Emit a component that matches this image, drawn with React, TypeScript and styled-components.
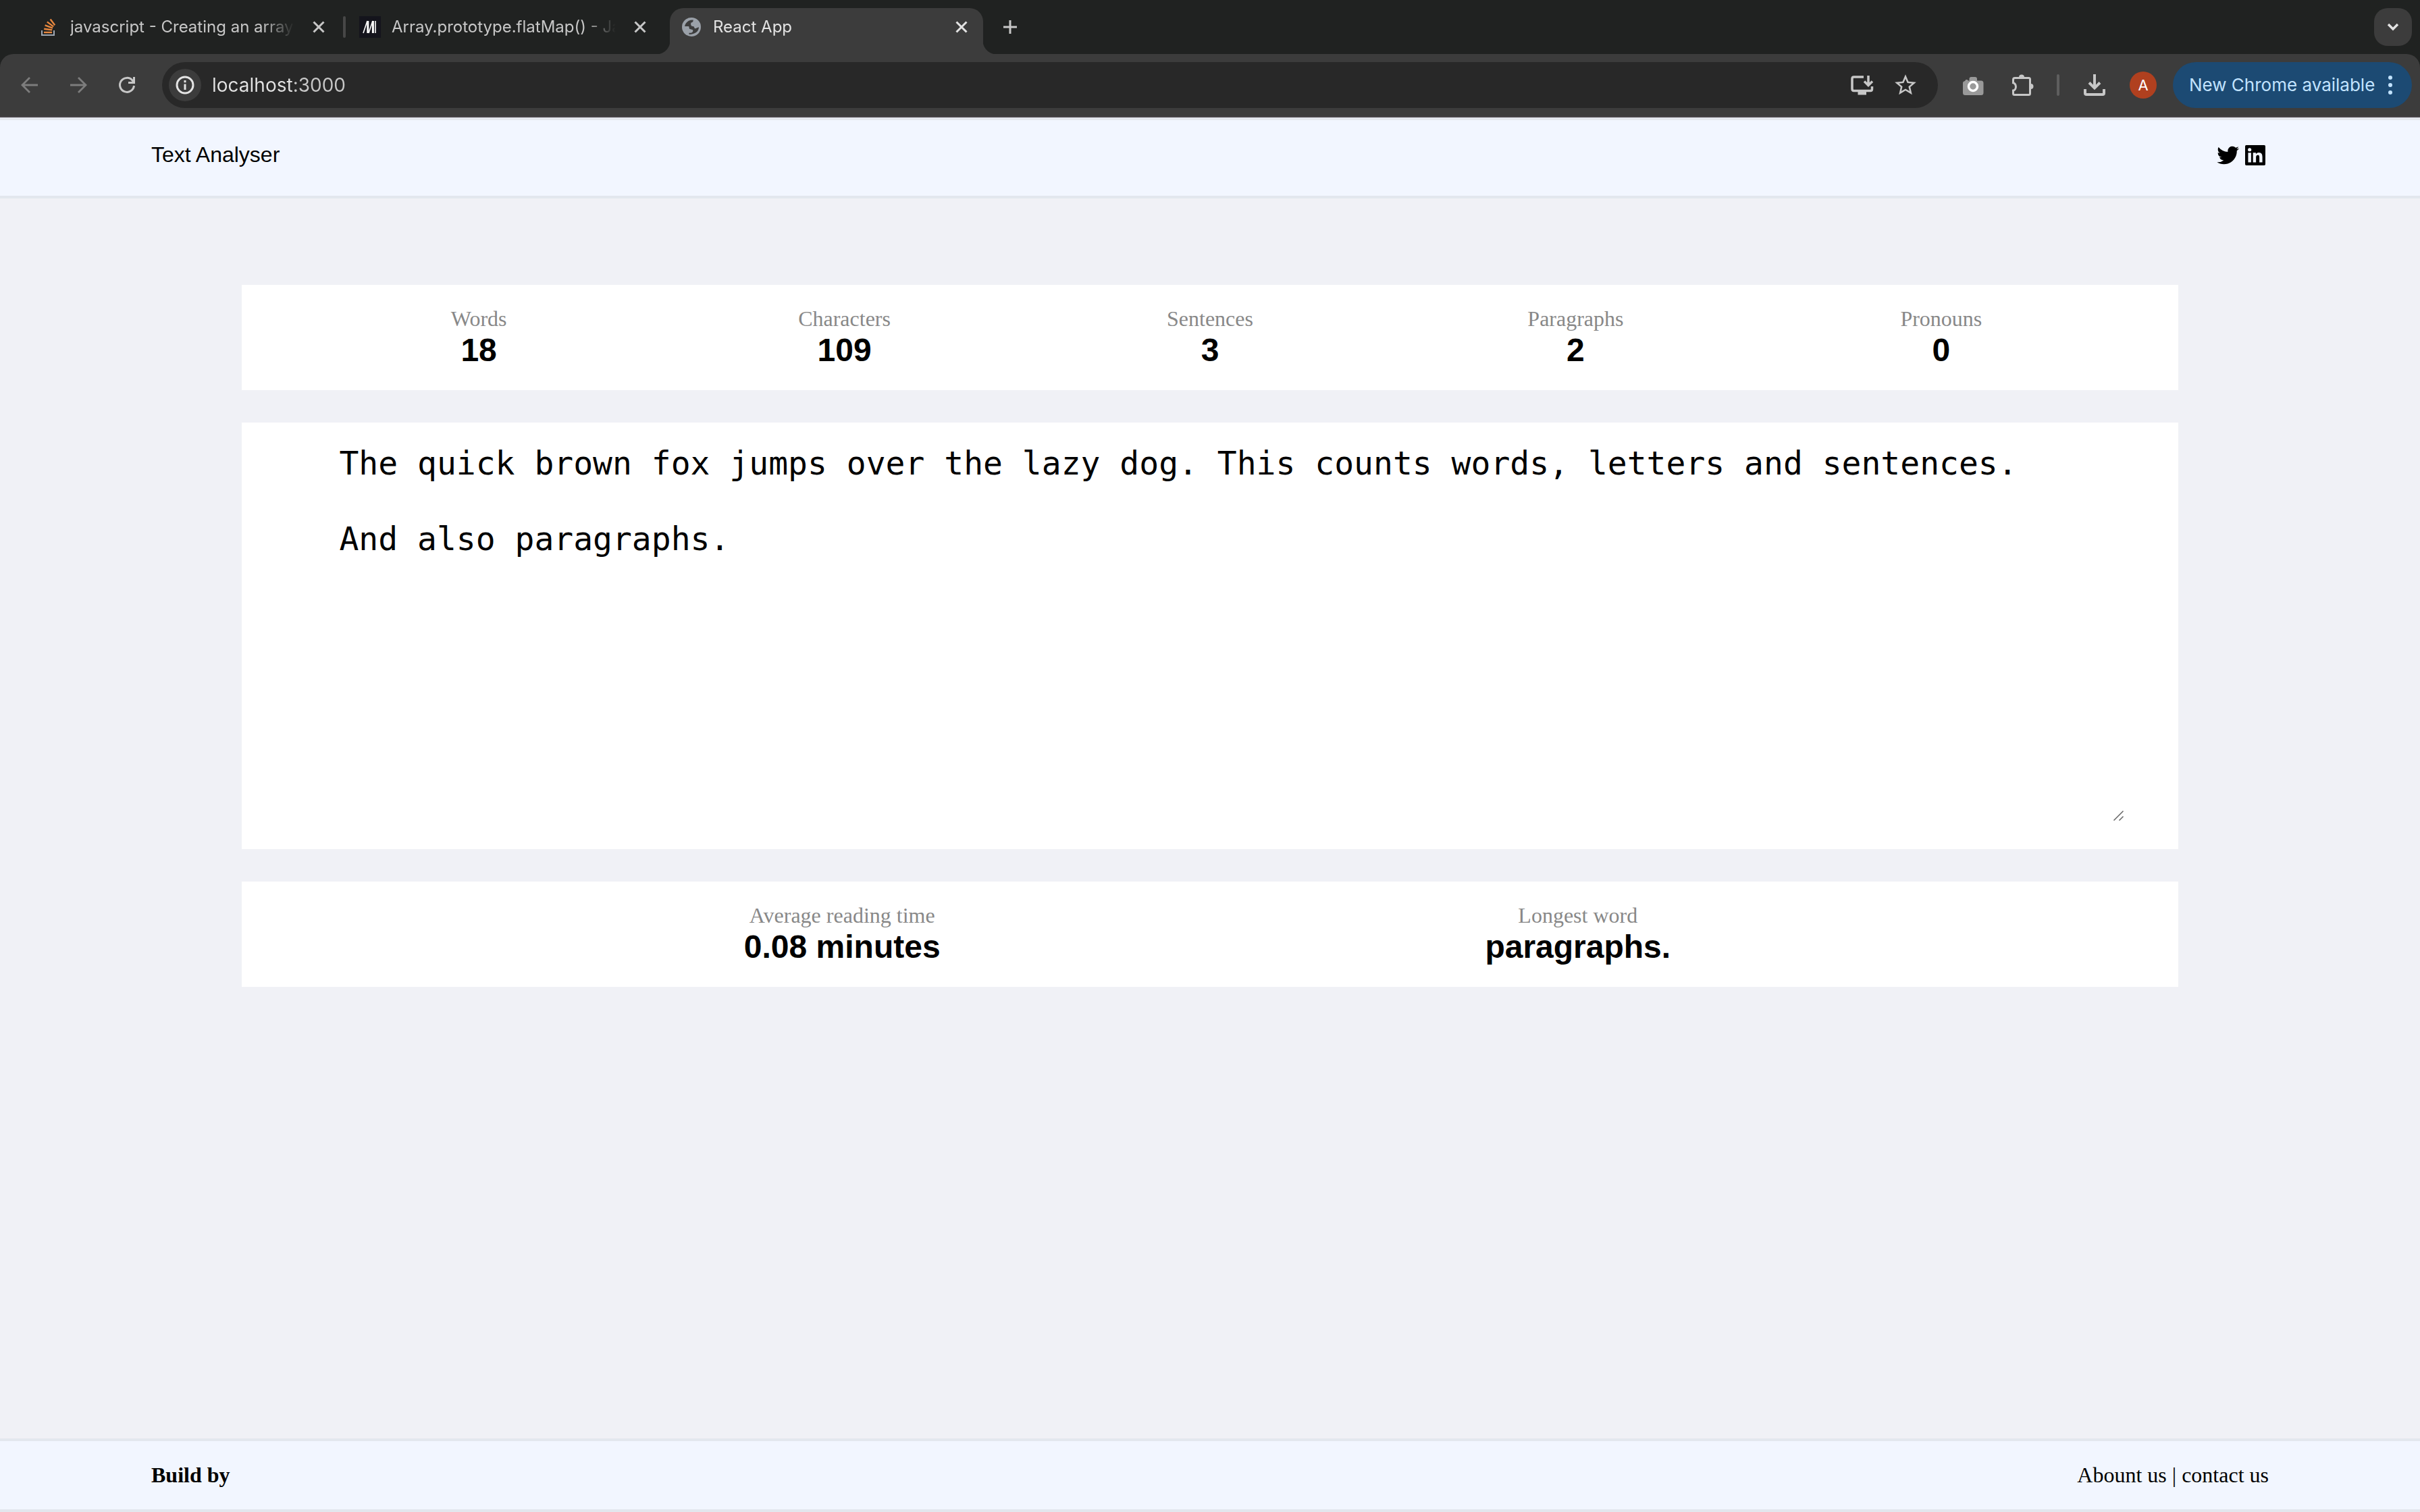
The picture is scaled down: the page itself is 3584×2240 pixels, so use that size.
import React from "react";
import styled, { createGlobalStyle, css } from "styled-components";
import { BiLogoTwitter, BiLogoLinkedinSquare } from "react-icons/bi";
import { MdStarBorder } from "react-icons/md";

const GlobalStyle = createGlobalStyle`
  *, *::before, *::after { box-sizing: border-box; }
  body {
    margin: 0;
    background: #f0f1f6;
    color: #000;
    font-family: "Liberation Serif", "Times New Roman", serif;
    font-size: 32px;
  }
  button {
    border: 0;
    padding: 0;
    background: none;
    color: inherit;
    font: inherit;
    cursor: pointer;
  }
  svg { display: block; overflow: visible; }
`;

const uiFont = css`
  font-family: Inter, Roboto, sans-serif;
`;
const sansFont = css`
  font-family: "Liberation Sans", Arial, sans-serif;
`;

const Screen = styled.div`
  min-height: 100vh;
  display: flex;
  flex-direction: column;
`;

/* ---------- browser window ---------- */

const Browser = styled.div`
  ${uiFont}
  background: #202221;
  color: #c7c7c7;
`;

const TabStrip = styled.div`
  display: flex;
  align-items: flex-start;
  height: 80px;
  padding: 12px 12px 0 34px;
`;

const Tab = styled.div<{ $active?: boolean }>`
  position: relative;
  display: flex;
  align-items: center;
  width: 464px;
  height: 68px;
  margin: 0 6px;
  padding: 0 16px 12px;
  color: ${(p) => (p.$active ? "#e3e3e3" : "#c7c7c7")};
  ${(p) =>
    p.$active &&
    css`
      background: #3c3c3c;
      border-radius: 20px 20px 0 0;
      &::before,
      &::after {
        content: "";
        position: absolute;
        bottom: 0;
        width: 20px;
        height: 20px;
      }
      &::before {
        right: 100%;
        background: radial-gradient(circle at 0 0, transparent 20px, #3c3c3c 21px);
      }
      &::after {
        left: 100%;
        background: radial-gradient(circle at 100% 0, transparent 20px, #3c3c3c 21px);
      }
    `}
`;

const TabTitle = styled.span`
  flex: 1;
  min-width: 0;
  margin: 0 20px 0 16px;
  white-space: nowrap;
  font-size: 24px;
  line-height: 32px;
  mask-image: linear-gradient(to right, #000 calc(100% - 48px), transparent);
`;

const TabDivider = styled.span`
  width: 4px;
  height: 32px;
  margin: 12px -2px 0;
  border-radius: 2px;
  background: #474747;
`;

const IconButton = styled.button<{ $size?: number; $dim?: boolean }>`
  display: grid;
  place-items: center;
  flex: none;
  width: ${(p) => p.$size ?? 32}px;
  height: ${(p) => p.$size ?? 32}px;
  color: ${(p) => (p.$dim ? "#7d7d7d" : "inherit")};
`;

const NewTab = styled(IconButton)`
  margin: 12px 0 0 18px;
`;

const TabSearch = styled(IconButton)`
  margin-left: auto;
  border-radius: 20px;
  background: #3c3c3c;
  color: #e3e3e3;
`;

const Toolbar = styled.div`
  display: flex;
  align-items: center;
  height: 94px;
  padding: 12px 12px 12px 28px;
  border-bottom: 2px solid #464346;
  border-radius: 20px 20px 0 0;
  background: #3c3c3c;
`;

const History = styled.div`
  display: flex;
  gap: 40px;
  margin-right: 36px;
`;

const Omnibox = styled.div`
  flex: 1;
  display: flex;
  align-items: center;
  gap: 24px;
  height: 68px;
  padding: 0 28px 0 10px;
  border-radius: 34px;
  background: #282828;
`;

const SiteInfo = styled(IconButton)`
  border-radius: 50%;
  background: #3c3c3c;
  color: #e3e3e3;
`;

const Address = styled.input`
  ${uiFont}
  flex: 1;
  min-width: 0;
  margin-left: -8px;
  padding: 0;
  border: 0;
  outline: 0;
  font-size: 28px;
  line-height: 36px;
  color: transparent;
  background: linear-gradient(to right, #e3e3e3 120px, #c7c7c7 120px);
  background-clip: text;
`;

const Actions = styled.div`
  display: flex;
  align-items: center;
  gap: 36px;
  margin-left: 36px;
`;

const Separator = styled.span`
  width: 4px;
  height: 32px;
  border-radius: 2px;
  background: #5e5e5e;
`;

const Avatar = styled.button`
  width: 40px;
  height: 40px;
  border-radius: 50%;
  background: #b0401f;
  color: #fff;
  font-size: 22px;
  line-height: 40px;
`;

const UpdatePill = styled.button`
  display: flex;
  align-items: center;
  justify-content: space-between;
  width: 354px;
  height: 68px;
  margin-left: 24px;
  padding: 0 28px 0 24px;
  border-radius: 34px;
  background: #1c4a73;
  color: #c2e3ff;
  font-size: 26px;
  line-height: 32px;
  white-space: nowrap;
`;

/* ---------- page ---------- */

const barLayout = css`
  display: flex;
  justify-content: space-between;
  border: 4px solid #e3e7ee;
  border-width: 4px 0;
  background: #f2f6ff;
`;

const Header = styled.header`
  ${barLayout}
  ${sansFont}
  padding: 32px 6.25% 40px;
  line-height: 38px;
`;

const Social = styled.nav`
  display: flex;
`;

const PageLink = styled.a`
  color: #000;
  text-decoration: none;
`;

const Main = styled.main`
  flex: 1;
  display: flex;
  flex-direction: column;
  gap: 48px;
  padding: 128px 10%;
`;

const Card = styled.section`
  background: #fff;
`;

const Stats = styled.dl<{ $inset: string }>`
  display: flex;
  margin: 0;
  padding: 32px ${(p) => p.$inset};
  text-align: center;
`;

const Stat = styled.div`
  flex: 1 1 0;
`;

const StatLabel = styled.dt`
  color: #888;
  line-height: 37px;
`;

const StatValue = styled.dd`
  ${sansFont}
  margin: 0;
  font-size: 48px;
  font-weight: 700;
  line-height: 55px;
`;

const Editor = styled.div`
  position: relative;
  margin: 0 80px;
  padding: 32px 0 40px;
`;

const TextInput = styled.textarea`
  display: block;
  width: 100%;
  padding: 0 64px;
  border: 0;
  outline: 0;
  resize: none;
  background: transparent;
  color: #000;
  font-family: "DejaVu Sans Mono", Menlo, monospace;
  font-size: 48px;
  line-height: 56px;
`;

const Grip = styled.svg`
  position: absolute;
  right: 1px;
  bottom: 42px;
  pointer-events: none;
`;

const Footer = styled.footer`
  ${barLayout}
  padding: 32px 6.25%;
  line-height: 37px;
`;

/* ---------- icons ---------- */

const StackOverflowIcon = () => (
  <svg width="32" height="32" viewBox="0 0 32 32" fill="none">
    <path d="M6 21v7h18v-7" stroke="#9fa8b3" strokeWidth="2" />
    <g stroke="#e8883f" strokeWidth="2.4">
      <path d="M9 24h12" />
      <path d="M9.2 18.8l12 1.6" />
      <path d="M10.6 13.4l11.4 4.2" />
      <path d="M13.8 8.4l9.4 7" />
      <path d="M18.6 4.6l6.6 8.6" />
    </g>
  </svg>
);

const MdnIcon = () => (
  <svg width="32" height="32" viewBox="0 0 32 32" fill="none">
    <path d="M0 0h32v32H0z" fill="#14141c" />
    <g stroke="#fff">
      <path d="M6 25l6-18" strokeWidth="1.6" />
      <path d="M12.8 7v18" strokeWidth="3" />
      <path d="M14 25l6-18" strokeWidth="1.6" />
      <path d="M20.4 7v18" strokeWidth="3" />
      <path d="M24 7v18" strokeWidth="1.6" />
    </g>
  </svg>
);

const GlobeIcon = () => (
  <svg width="32" height="32" viewBox="-2 -2 32 32">
    <circle cx="14" cy="14" r="14" fill="#9aa0a8" />
    <path
      fill="#3c3c3c"
      d="M4 13C5 8 9 3.400 16.500 3.500c.6 2-.8 3.900-3 4l-.5 2.500 1 2.500 3.500.8 1.500 3c2.500 0 3.500-1.800 6-2C25 20 20 25 10.500 25v-2.200c5 .2 6.500-1.800 5.500-4.600l-5-1.400-.8-3.800z"
    />
  </svg>
);

const CloseIcon = () => (
  <svg width="20" height="20" viewBox="0 0 20 20" stroke="currentColor" strokeWidth="3">
    <path d="M2.500 2.500l15 15M17.500 2.500l-15 15" />
  </svg>
);

const PlusIcon = () => (
  <svg width="20" height="20" viewBox="0 0 20 20" stroke="currentColor" strokeWidth="3">
    <path d="M10 0v20M0 10h20" />
  </svg>
);

const ChevronIcon = () => (
  <svg width="18" height="12" viewBox="0 0 18 12" fill="none" stroke="currentColor" strokeWidth="3.400">
    <path d="M2 2l7 7 7-7" />
  </svg>
);

const ArrowIcon = ({ forward }: { forward?: boolean }) => (
  <svg width="24" height="24" viewBox="0 0 24 24" fill="none" stroke="currentColor" strokeWidth="2.800">
    <path d={forward ? "M0 12h22M12 1l11 11-11 11" : "M24 12H2M12 1L1 12l11 11"} />
  </svg>
);

const ReloadIcon = () => (
  <svg width="24" height="24" viewBox="0 0 24 24" fill="none" stroke="currentColor" strokeWidth="3">
    <path d="M22.500 13A10.500 10.500 0 1 1 20 5l2 2.500M22.500 0v8.500H14" />
  </svg>
);

const InfoIcon = () => (
  <svg width="28" height="28" viewBox="0 0 28 28" fill="none" stroke="currentColor" strokeWidth="3">
    <circle cx="14" cy="14" r="12" />
    <path d="M14 12.500v8.500M14 7v3.200" />
  </svg>
);

const InstallIcon = () => (
  <svg width="34" height="32" viewBox="0 0 34 32" fill="none" stroke="currentColor" strokeWidth="3.500">
    <path d="M19 4H4.500Q2 4 2 6.500v15Q2 24.500 4.500 24.500h24.500q2.500 0 2.500-2.500v-4M26 2v14M20 10.500l6 6 6-6" />
    <path d="M10.500 24.500h12.500v6H10.500z" fill="currentColor" stroke="none" />
  </svg>
);

const CameraIcon = () => (
  <svg width="36" height="36" viewBox="0 0 36 36">
    <path
      fill="#999"
      d="M4 12l1.500-2 2 0 1.500 1.500h1.500V9q0-3 3-3h5.500q3 0 3 3v2.500h6q3.500 0 3.500 3.500v14.500q0 3.500-3.500 3.500H4.500Q1 33 1 29.500V15q0-2.500 3-3z"
    />
    <circle cx="16" cy="20" r="6.500" fill="#999" stroke="#fff" strokeWidth="3.500" />
  </svg>
);

const PuzzleIcon = () => (
  <svg width="32" height="32" viewBox="-2 0 32 32" fill="none" stroke="currentColor" strokeWidth="3">
    <path d="M1.500 12V8Q1.500 5.500 4 5.500h20.500q2 0 2 2v21q0 2-2 2H3.500q-2 0-2-2V24C7 23 7 13 0 12.500" />
    <path d="M10 4.500a4 4 0 0 1 8 0zM27.500 14a4 4 0 0 1 0 8z" fill="currentColor" stroke="none" />
  </svg>
);

const DownloadIcon = () => (
  <svg width="32" height="32" viewBox="0 0 32 32" fill="none" stroke="currentColor" strokeWidth="4">
    <path d="M16 0v21M8 12.500l8 8 8-8M2 22v6q0 2 2 2h24q2 0 2-2v-6" />
  </svg>
);

const DotsIcon = () => (
  <svg width="8" height="28" viewBox="0 0 8 28" fill="currentColor">
    <circle cx="4" cy="3" r="3" />
    <circle cx="4" cy="14" r="3" />
    <circle cx="4" cy="25" r="3" />
  </svg>
);

/* ---------- content ---------- */

const tabs = [
  { title: "javascript - Creating an array", icon: <StackOverflowIcon />, divider: true },
  { title: "Array.prototype.flatMap() - Ja", icon: <MdnIcon /> },
  { title: "React App", icon: <GlobeIcon />, active: true },
];

const counts = [
  ["Words", "18"],
  ["Characters", "109"],
  ["Sentences", "3"],
  ["Paragraphs", "2"],
  ["Pronouns", "0"],
];

const details = [
  ["Average reading time", "0.08 minutes"],
  ["Longest word", "paragraphs."],
];

const sampleText =
  "The quick brown fox jumps over the lazy dog. This counts words, letters and sentences.\n\nAnd also paragraphs.";

const StatRow = ({ items, inset }: { items: string[][]; inset: string }) => (
  <Card>
    <Stats $inset={inset}>
      {items.map(([label, value]) => (
        <Stat key={label}>
          <StatLabel>{label}</StatLabel>
          <StatValue>{value}</StatValue>
        </Stat>
      ))}
    </Stats>
  </Card>
);

export default function App() {
  return (
    <Screen>
      <GlobalStyle />
      <Browser>
        <TabStrip>
          {tabs.map((tab) => (
            <React.Fragment key={tab.title}>
              <Tab $active={tab.active}>
                {tab.icon}
                <TabTitle>{tab.title}</TabTitle>
                <IconButton aria-label="Close tab">
                  <CloseIcon />
                </IconButton>
              </Tab>
              {tab.divider && <TabDivider />}
            </React.Fragment>
          ))}
          <NewTab aria-label="New tab">
            <PlusIcon />
          </NewTab>
          <TabSearch $size={56} aria-label="Search tabs">
            <ChevronIcon />
          </TabSearch>
        </TabStrip>
        <Toolbar>
          <History>
            <IconButton $dim aria-label="Back">
              <ArrowIcon />
            </IconButton>
            <IconButton $dim aria-label="Forward">
              <ArrowIcon forward />
            </IconButton>
            <IconButton aria-label="Reload">
              <ReloadIcon />
            </IconButton>
          </History>
          <Omnibox>
            <SiteInfo $size={48} aria-label="View site information">
              <InfoIcon />
            </SiteInfo>
            <Address aria-label="Address" defaultValue="localhost:3000" />
            <IconButton $size={40} aria-label="Install app">
              <InstallIcon />
            </IconButton>
            <IconButton $size={40} aria-label="Bookmark this tab">
              <MdStarBorder size={38} />
            </IconButton>
          </Omnibox>
          <Actions>
            <IconButton $size={36} aria-label="Screenshot extension">
              <CameraIcon />
            </IconButton>
            <IconButton aria-label="Extensions">
              <PuzzleIcon />
            </IconButton>
            <Separator />
            <IconButton aria-label="Downloads">
              <DownloadIcon />
            </IconButton>
            <Avatar aria-label="Profile A">A</Avatar>
          </Actions>
          <UpdatePill>
            New Chrome available
            <DotsIcon />
          </UpdatePill>
        </Toolbar>
      </Browser>

      <Header>
        <span>Text Analyser</span>
        <Social>
          <PageLink href="#twitter" aria-label="Twitter">
            <BiLogoTwitter size={40} />
          </PageLink>
          <PageLink href="#linkedin" aria-label="LinkedIn">
            <BiLogoLinkedinSquare size={40} />
          </PageLink>
        </Social>
      </Header>

      <Main>
        <StatRow items={counts} inset="80px" />
        <Card>
          <Editor>
            <TextInput rows={10} aria-label="Text to analyse" spellCheck={false} defaultValue={sampleText} />
            <Grip width="15" height="15" viewBox="0 0 15 15" stroke="#666" strokeWidth="1.500">
              <path d="M.5 14.500l14-14M8.500 14.500l6-6" />
            </Grip>
          </Editor>
        </Card>
        <StatRow items={details} inset="12%" />
      </Main>

      <Footer>
        <strong>Build by</strong>
        <span>
          <PageLink href="#about">Abount us</PageLink> | <PageLink href="#contact">contact us</PageLink>
        </span>
      </Footer>
    </Screen>
  );
}
